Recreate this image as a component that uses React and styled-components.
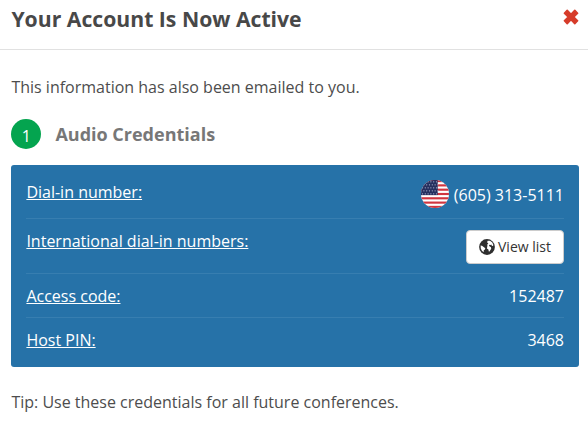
import React from "react";
import styled, { createGlobalStyle } from "styled-components";

const GlobalStyle = createGlobalStyle`
   * {
      box-sizing: border-box;
   }
   body {
      margin: 0;
      background: #fff;
      color: #4d4d4d;
      font-family: "Open Sans", "Noto Sans", sans-serif;
      font-size: 16px;
      line-height: 22px;
   }
`;

const Header = styled.header`
   display: flex;
   justify-content: space-between;
   height: 50px;
   padding: 5px 9px 0 11.4px;
   border-bottom: 1px solid #e1e1e1;
`;

const Title = styled.h1`
   margin: 0;
   font-size: 21.2px;
   line-height: 28px;
   font-weight: 700;
   color: #484848;
`;

const CloseButton = styled.button`
   width: 16px;
   height: 16px;
   margin-top: 4px;
   padding: 0;
   border: 0;
   background: none;
   svg {
      display: block;
   }
`;

const Body = styled.main`
   padding: 26px 9px 0 11.4px;
`;

const Text = styled.p`
   margin: 0;
`;

const StepHeading = styled.div`
   display: flex;
   align-items: center;
   gap: 14px;
   margin: 21px 0 16px;
`;

const StepNumber = styled.span`
   width: 30px;
   height: 30px;
   padding-top: 2px;
   border-radius: 50%;
   background: #04a44f;
   color: #fff;
   line-height: 30px;
   text-align: center;
`;

const StepTitle = styled.h2`
   margin: 0;
   font-size: 18px;
   line-height: 24px;
   font-weight: 700;
   color: #777;
`;

const Panel = styled.section`
   height: 202px;
   margin-bottom: 24px;
   padding: 1px 15px 0;
   border-radius: 3px;
   background: #2672a8;
   color: #fff;
`;

const Row = styled.div`
   display: flex;
   justify-content: space-between;
   height: ${(props) => props.height}px;
   padding-top: ${(props) => props.top || 11}px;
   border-bottom: ${(props) => (props.last ? "0" : "1px solid #377eb0")};
`;

const RowLabel = styled.a`
   color: #fff;
   text-decoration: underline;
`;

const PhoneNumber = styled.span`
   display: flex;
   align-items: center;
   gap: 5px;
   height: 28px;
   svg {
      margin-bottom: 2px;
   }
`;

const ViewListButton = styled.button`
   display: flex;
   align-items: center;
   justify-content: center;
   gap: 3px;
   width: 98px;
   height: 34px;
   padding: 0 0 1px;
   border: 1px solid #ccc;
   border-radius: 4px;
   background: #fff;
   color: #333;
   font-family: inherit;
   font-size: 14px;
`;

const CloseIcon = () => (
   <svg width="16" height="16" viewBox="0 0 16 16">
      <path
         d="M4.2 1.4 8 5.2l3.8-3.8 2.8 2.8L10.8 8l3.8 3.8-2.8 2.8L8 10.8l-3.8 3.8-2.8-2.8L5.2 8 1.4 4.2z"
         fill="#d63c2a"
         stroke="#d63c2a"
         strokeWidth="1.6"
         strokeLinejoin="round"
      />
   </svg>
);

const GlobeIcon = () => (
   <svg width="16" height="16" viewBox="0 0 16 16">
      <circle cx="8" cy="8" r="7.9" fill="#2e2e2e" />
      <path
         d="M8.6 1.8 11 1.8 13.3 3.6 14.4 6 13.9 7.1 12.8 6.7 12.4 5.4 11.4 6 10.2 5.8 10.1 7.1 12 8.3 12.2 9.7 10.5 12.4 9.8 12.5 9.4 10.5 7.9 9.5 8.3 7.4 8.4 5.2 9.4 4.2 8.1 3.4z"
         fill="#fff"
      />
      <path
         d="M1.6 6.4 3 6.8 4.7 8 6.3 9.3 5.9 10.6 4.8 11.3 4.6 13.2 2.9 11.7 1.8 9.6z"
         fill="#fff"
      />
   </svg>
);

const FlagIcon = () => {
   const stripes = [0, 2, 4, 6, 8, 10, 12];
   const stars = [];
   for (let row = 0; row < 5; row++) {
      for (let col = 0; col < 6; col++) {
         stars.push([1.5 + col * 2.8 + (row % 2) * 1.4, 1.8 + row * 3]);
      }
   }
   return (
      <svg width="28" height="28" viewBox="0 0 28 28">
         <defs>
            <clipPath id="flag-circle">
               <circle cx="14" cy="14" r="14" />
            </clipPath>
         </defs>
         <g clipPath="url(#flag-circle)">
            <rect width="28" height="28" fill="#fff" />
            {stripes.map((n) => (
               <rect key={n} y={(n * 28) / 13} width="28" height={28 / 13} fill="#d0353f" />
            ))}
            <rect width="16.7" height="15.1" fill="#26305f" />
            {stars.map(([x, y]) => (
               <circle key={`${x}-${y}`} cx={x} cy={y} r="0.65" fill="#a9b0cd" />
            ))}
         </g>
      </svg>
   );
};

const App = () => {
   return (
      <React.Fragment>
         <GlobalStyle />
         <Header>
            <Title>Your Account Is Now Active</Title>
            <CloseButton aria-label="Close">
               <CloseIcon />
            </CloseButton>
         </Header>
         <Body>
            <Text>This information has also been emailed to you.</Text>
            <StepHeading>
               <StepNumber>1</StepNumber>
               <StepTitle>Audio Credentials</StepTitle>
            </StepHeading>
            <Panel>
               <Row height={53} top={15}>
                  <RowLabel>Dial-in number:</RowLabel>
                  <PhoneNumber>
                     <FlagIcon />
                     (605) 313-5111
                  </PhoneNumber>
               </Row>
               <Row height={55}>
                  <RowLabel>International dial-in numbers:</RowLabel>
                  <ViewListButton>
                     <GlobeIcon />
                     View list
                  </ViewListButton>
               </Row>
               <Row height={44}>
                  <RowLabel>Access code:</RowLabel>
                  <span>152487</span>
               </Row>
               <Row height={44} last>
                  <RowLabel>Host PIN:</RowLabel>
                  <span>3468</span>
               </Row>
            </Panel>
            <Text>Tip: Use these credentials for all future conferences.</Text>
         </Body>
      </React.Fragment>
   );
};

export default App;
